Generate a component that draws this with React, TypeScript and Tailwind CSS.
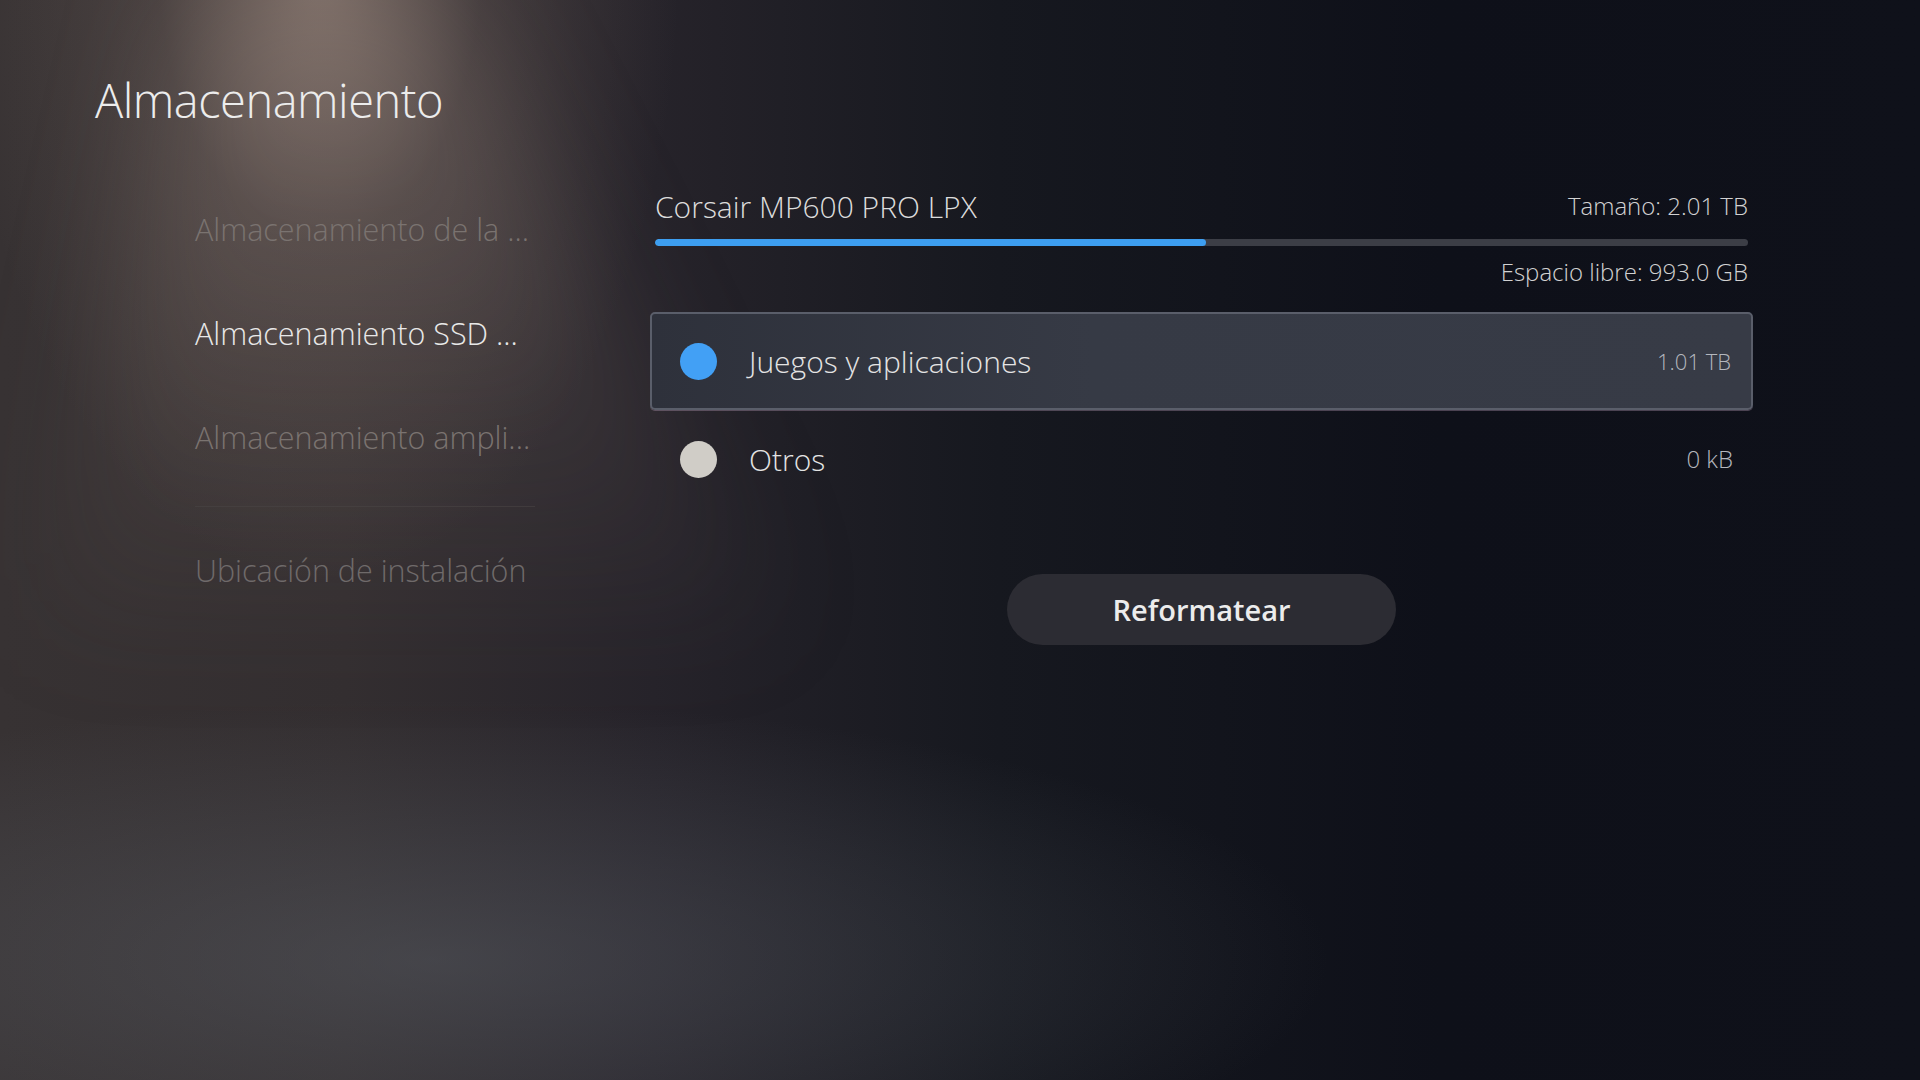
import React from 'react'

const navItems = [
    { label: 'Almacenamiento de la ...', active: false },
    { label: 'Almacenamiento SSD ...', active: true },
    { label: 'Almacenamiento ampli...', active: false },
]

export default function App() {
    return (
        <div
            className="relative w-[1920px] h-[1080px] overflow-hidden bg-[#0f111a] text-[#e6e6e6]"
            style={{ fontFamily: '"Open Sans", "Noto Sans", sans-serif' }}
        >
            {/* background lighting */}
            <div className="absolute inset-0 bg-[linear-gradient(90deg,#373233_0%,#332e30_18%,#26232a_34%,#16181f_52%,#0e1019_75%,#0f111a_100%)]" />
            <div className="absolute left-0 top-0 w-[1000px] h-[800px] blur-[60px]">
                <div className="w-full h-full [clip-path:polygon(200px_0,440px_0,780px_620px,40px_620px)] bg-[linear-gradient(180deg,rgba(170,150,140,0.3),rgba(120,105,100,0.1)_65%,transparent)]" />
            </div>
            <div className="absolute inset-0 bg-[radial-gradient(ellipse_360px_620px_at_320px_-40px,rgba(195,170,155,0.5),rgba(150,130,120,0.2)_45%,transparent_100%)]" />
            <div className="absolute inset-0 bg-[radial-gradient(ellipse_900px_260px_at_430px_960px,rgba(95,100,108,0.45),transparent_100%)]" />

            <div className="relative flex flex-col">
                <h1 className="pl-[95px] pt-[70px] text-[47px] font-light leading-[60px] text-[#ececec] tracking-[-0.5px]">
                    Almacenamiento
                </h1>

                <div className="flex mt-[48px]">
                    {/* left nav */}
                    <nav className="ml-[195px] w-[340px] flex flex-col">
                        {navItems.map((item) => (
                            <div
                                key={item.label}
                                className={`h-[104px] flex items-center text-[30.5px] font-light whitespace-nowrap ${item.active ? 'text-[#e8e8e8]' : 'text-[#7a7370]'}`}
                            >
                                {item.label}
                            </div>
                        ))}
                        <div className="mt-[16px] h-px bg-[#4a4444]/60" />
                        <div className="mt-[12px] h-[104px] flex items-center text-[30.5px] font-light text-[#6f6a6a] whitespace-nowrap">
                            Ubicación de instalación
                        </div>
                    </nav>

                    {/* right panel */}
                    <section className="ml-[115px] pt-[8px] w-[1103px] flex flex-col">
                        <div className="px-[5px] flex items-center justify-between h-[40px]">
                            <span className="text-[30px] font-light text-[#dcdcdc]">Corsair MP600 PRO LPX</span>
                            <span className="text-[24px] font-light text-[#d2d2d2]">Tamaño: 2.01 TB</span>
                        </div>
                        <div className="mx-[5px] mt-[13px] h-[7px] rounded-full bg-[#3c3e46] overflow-hidden flex">
                            <div className="w-[551px] h-full bg-[#3d9ef0] rounded-full" />
                        </div>
                        <div className="px-[5px] mt-[6px] text-right text-[24px] font-light text-[#d2d2d2] leading-[40px]">
                            Espacio libre: 993.0 GB
                        </div>

                        <div className="mt-[20px] h-[98px] rounded-[5px] border-2 border-[#5a5e6a] shadow-[0_1px_0_rgba(190,160,190,0.35)] bg-[linear-gradient(90deg,#2e313b_0%,#363a45_40%,#373b46_100%)] flex items-center px-[28px]">
                            <span className="w-[37px] h-[37px] rounded-full bg-[#42a0f5]" />
                            <span className="ml-[32px] text-[30px] font-light text-[#e4e4e4]">Juegos y aplicaciones</span>
                            <span className="ml-auto mr-[-8px] text-[22px] font-light text-[#b4b7be]">1.01 TB</span>
                        </div>

                        <div className="h-[98px] flex items-center px-[30px]">
                            <span className="w-[37px] h-[37px] rounded-full bg-[#d0cdc7]" />
                            <span className="ml-[32px] text-[30px] font-light text-[#e4e4e4]">Otros</span>
                            <span className="ml-auto mr-[-10px] text-[24px] font-light text-[#b4b7be]">0 kB</span>
                        </div>

                        <div className="mt-[66px] flex justify-center">
                            <button className="w-[389px] h-[71px] rounded-full bg-[#2c2c33] text-[29px] font-semibold text-[#ececec]">
                                Reformatear
                            </button>
                        </div>
                    </section>
                </div>
            </div>
        </div>
    )
}
